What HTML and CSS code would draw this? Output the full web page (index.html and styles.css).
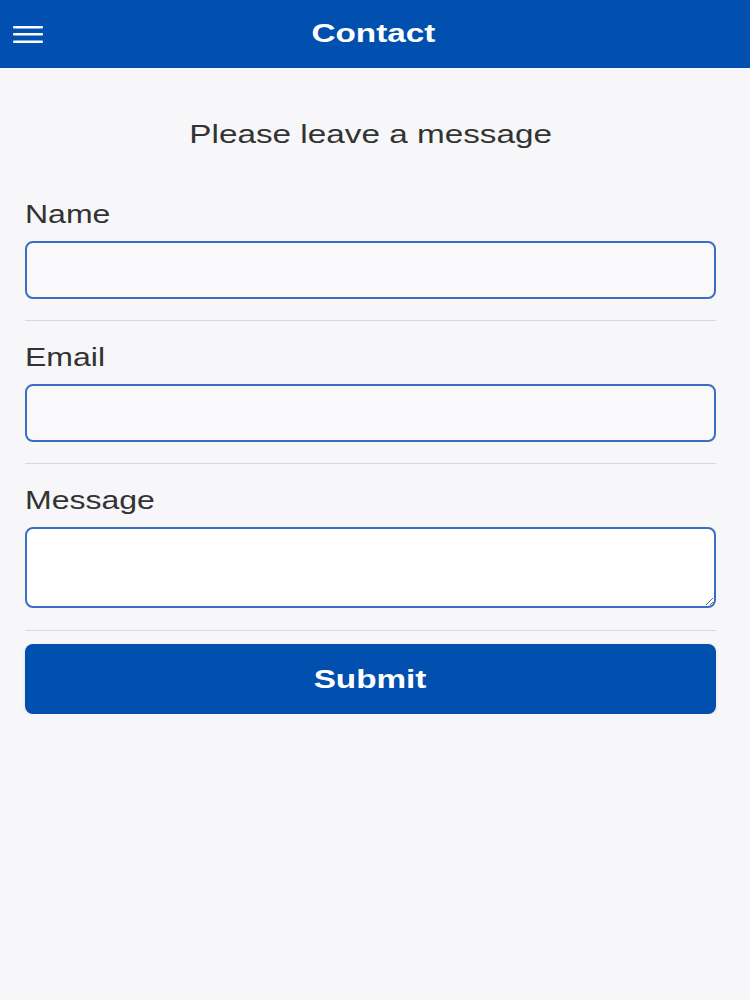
FILE: index.html
```html
<!DOCTYPE html>
<html lang="en">
<head>
<meta charset="utf-8">
<title>Contact</title>
<link rel="stylesheet" href="styles.css">
</head>
<body>
<header class="topbar">
  <button class="menu-btn" aria-label="Menu">
    <svg width="30" height="18" viewBox="0 0 30 18" aria-hidden="true">
      <rect x="0" y="0" width="30" height="2.6" rx="1" fill="#fff"/>
      <rect x="0" y="7" width="30" height="2.6" rx="1" fill="#fff"/>
      <rect x="0" y="14.5" width="30" height="2.6" rx="1" fill="#fff"/>
    </svg>
  </button>
  <h1 class="title"><span class="wide">Contact</span></h1>
</header>
<main class="content">
  <p class="intro"><span class="wide">Please leave a message</span></p>
  <form class="form">
    <div class="field">
      <label class="label" for="name"><span class="wide wide-left">Name</span></label>
      <input class="input" id="name" type="text">
    </div>
    <hr class="divider">
    <div class="field">
      <label class="label" for="email"><span class="wide wide-left">Email</span></label>
      <input class="input" id="email" type="email">
    </div>
    <hr class="divider">
    <div class="field">
      <label class="label" for="message"><span class="wide wide-left">Message</span></label>
      <textarea class="textarea" id="message"></textarea>
    </div>
    <hr class="divider divider-last">
    <button type="button" class="submit"><span class="wide">Submit</span></button>
  </form>
</main>
</body>
</html>
```
FILE: styles.css
```css
html, body {
  margin: 0;
  padding: 0;
}
body {
  background: #f7f7f9;
  font-family: "Liberation Sans", Arial, sans-serif;
  color: #333;
}
.wide {
  display: inline-block;
  transform: scaleX(1.28);
  transform-origin: center;
}
.wide-left {
  transform-origin: left center;
}
.topbar {
  position: relative;
  height: 68px;
  background: #0150b0;
  display: flex;
  align-items: center;
  justify-content: center;
}
.menu-btn {
  position: absolute;
  left: 13px;
  top: 26px;
  padding: 0;
  margin: 0;
  border: 0;
  background: none;
  width: 30px;
  height: 18px;
  display: block;
}
.menu-btn svg {
  display: block;
}
.title {
  margin: 0 4px 0 0;
  font-size: 26px;
  line-height: 30px;
  font-weight: bold;
  color: #fff;
  position: relative;
  top: -1px;
}
.content {
  padding: 0 34px 0 25px;
}
.intro {
  margin: 51px 0 0;
  font-size: 26px;
  line-height: 30px;
  text-align: center;
  color: #333;
}
.form {
  margin-top: 51px;
  display: flex;
  flex-direction: column;
}
.field {
  display: flex;
  flex-direction: column;
}
.label {
  font-size: 25px;
  line-height: 28px;
  color: #333;
  margin-bottom: 13px;
}
.input, .textarea {
  box-sizing: border-box;
  width: 100%;
  margin: 0;
  border: 2px solid #3b6ec2;
  border-radius: 8px;
  font: inherit;
  outline: none;
}
.input {
  height: 58px;
  background: #f9f9fb;
}
.textarea {
  display: block;
  height: 81px;
  background: #fff;
  resize: vertical;
}
.divider {
  width: 100%;
  border: 0;
  border-top: 1px solid #d9d9dc;
  margin: 21px 0 22px;
}
.divider-last {
  margin: 22px 0 13px;
}
.submit {
  height: 70px;
  width: 100%;
  border: 0;
  border-radius: 8px;
  background: #0150b0;
  color: #fff;
  font-family: "Liberation Sans", Arial, sans-serif;
  font-size: 26px;
  font-weight: bold;
  box-shadow: 0 1px 3px rgba(0,0,0,0.12);
}
```
